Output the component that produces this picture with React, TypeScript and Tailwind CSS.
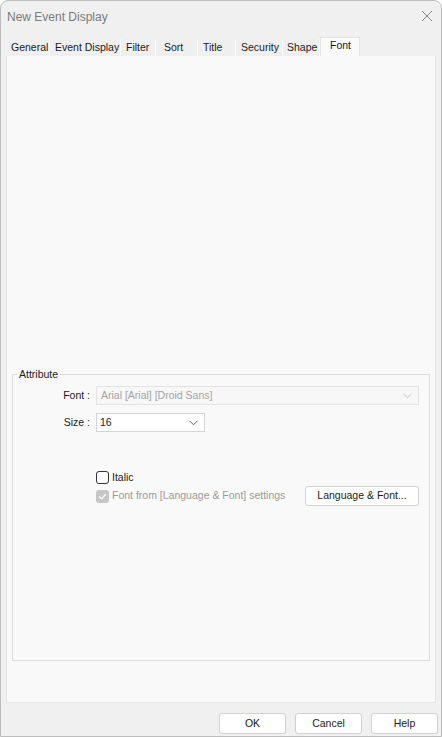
import React from "react";

const tabs = [
  { label: "General", w: "w-[42px]", pl: "pl-[3px]" },
  { label: "Event Display", w: "w-[71px]", pl: "pl-[5px]" },
  { label: "Filter", w: "w-[35px]", pl: "pl-[5px]" },
  { label: "Sort", w: "w-[42px]", pl: "pl-[8px]" },
  { label: "Title", w: "w-[38px]", pl: "pl-[5px]" },
  { label: "Security", w: "w-[47px]", pl: "pl-[5px]" },
  { label: "Shape", w: "w-[37px]", pl: "pl-[4px]" },
];

function Chevron({ color = "#777" }: { color?: string }) {
  return (
    <svg width="9" height="6" viewBox="0 0 9 6" fill="none">
      <path d="M0.5 0.8 L4.5 4.8 L8.5 0.8" stroke={color} strokeWidth="1" />
    </svg>
  );
}

function DialogButton({ label, className = "" }: { label: string; className?: string }) {
  return (
    <button
      className={`bg-white border border-[#d0d0d0] rounded-[3px] text-[10.5px] text-[#1a1a1a] ${className}`}
    >
      {label}
    </button>
  );
}

export default function App() {
  return (
    <div
      className="w-[442px] h-[737px] bg-[#f0f0f0] border border-[#bdbdbd] rounded-t-[8px] flex flex-col overflow-hidden"
      style={{ fontFamily: '"Liberation Sans", Arial, sans-serif' }}
    >
      {/* title bar */}
      <div className="h-[37px] flex items-start justify-between pt-[7px] pl-[6px] pr-[8px]">
        <span className="text-[12px] text-[#7a7a7a]">New Event Display</span>
        <svg width="12" height="12" viewBox="0 0 12 12" className="mt-[2px]">
          <path d="M1 1 L11 11 M11 1 L1 11" stroke="#8a8a8a" strokeWidth="1" />
        </svg>
      </div>

      {/* tabs */}
      <div className="h-[18px] flex items-end pl-[7px]">
        {tabs.map((t) => (
          <div
            key={t.label}
            className={`${t.w} ${t.pl} h-[17px] pt-[1px] flex items-center text-[10.5px] text-[#1a1a1a] bg-[#efefef] border-r border-[#fafafa] whitespace-nowrap overflow-hidden`}
          >
            {t.label}
          </div>
        ))}
        <div className="w-[40px] h-[19px] pl-[9px] pb-[2px] flex items-center text-[10.5px] text-[#1a1a1a] bg-[#f9f9f9] border-x border-t border-[#e6e6e6]">
          Font
        </div>
      </div>

      {/* tab panel */}
      <div className="mx-[5px] h-[647px] bg-[#f9f9f9] border border-[#e6e6e6] border-t-0 pt-[312px] px-[5px]">
        <fieldset className="h-[293px] border border-[#dcdcdc] px-0">
          <legend className="ml-[4px] px-[2px] text-[10.5px] text-[#1a1a1a] leading-[13px]">Attribute</legend>

          <div className="flex items-center mt-[5px] h-[19px]">
            <span className="w-[83px] pr-[6px] text-right text-[10.5px] text-[#1a1a1a]">Font :</span>
            <div className="w-[323px] h-[19px] flex items-center justify-between pl-[4px] pr-[6px] bg-[#f7f7f7] border border-[#e3e3e3]">
              <span className="text-[10.5px] text-[#a3a3a3]">Arial [Arial] [Droid Sans]</span>
              <Chevron color="#c4c4c4" />
            </div>
          </div>

          <div className="flex items-center mt-[8px] h-[19px]">
            <span className="w-[83px] pr-[6px] text-right text-[10.5px] text-[#1a1a1a]">Size :</span>
            <div className="w-[109px] h-[19px] flex items-center justify-between pl-[3px] pr-[6px] bg-white border border-[#d4d4d4]">
              <span className="text-[10.5px] text-[#1a1a1a]">16</span>
              <Chevron color="#666" />
            </div>
          </div>

          <div className="pl-[83px] mt-[39px] flex flex-col gap-[2px]">
            <div className="flex items-center h-[13px]">
              <span className="w-[13px] h-[13px] rounded-[3px] border border-[#333] bg-white" />
              <span className="ml-[3px] text-[10.5px] text-[#1a1a1a]">Italic</span>
            </div>
            <div className="flex items-center justify-between pr-[10px] h-[20px]">
              <div className="flex items-center h-[13px]">
                <span className="w-[13px] h-[13px] rounded-[3px] bg-[#c6c6c6] flex items-center justify-center">
                  <svg width="9" height="7" viewBox="0 0 9 7" fill="none">
                    <path d="M1 3.5 L3.5 6 L8 1" stroke="#fff" strokeWidth="1.2" />
                  </svg>
                </span>
                <span className="ml-[3px] text-[10.5px] text-[#9a9a9a]">Font from [Language &amp; Font] settings</span>
              </div>
              <DialogButton label="Language & Font..." className="w-[114px] h-[20px]" />
            </div>
          </div>
        </fieldset>
      </div>

      {/* footer */}
      <div className="flex justify-end gap-[9px] pt-[10px] pr-[3px]">
        <DialogButton label="OK" className="w-[67px] h-[21px]" />
        <DialogButton label="Cancel" className="w-[67px] h-[21px]" />
        <DialogButton label="Help" className="w-[67px] h-[21px]" />
      </div>
    </div>
  );
}
